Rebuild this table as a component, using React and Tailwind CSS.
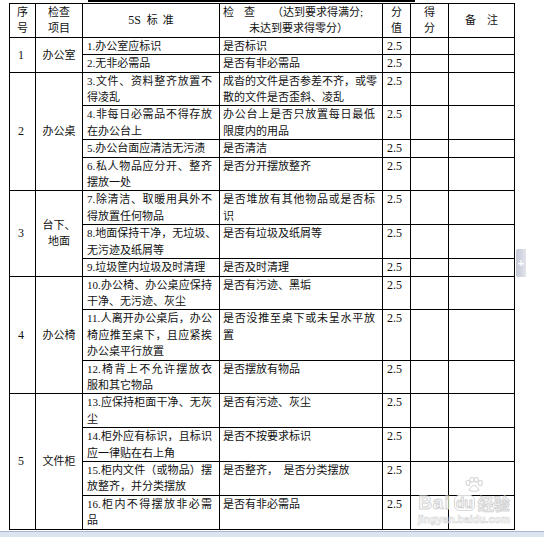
import React from "react";

const groups = [
  {
    no: "1",
    item: ["办公室"],
    rows: [
      { std: ["1.办公室应标识"], chk: ["是否标识"] },
      { std: ["2.无非必需品"], chk: ["是否有非必需品"] },
    ],
  },
  {
    no: "2",
    item: ["办公桌"],
    rows: [
      { std: ["3.文件、资料整齐放置不", "得凌乱"], chk: ["成沓的文件是否参差不齐，或零", "散的文件是否歪斜、凌乱"] },
      { std: ["4.非每日必需品不得存放", "在办公台上"], chk: ["办公台上是否只放置每日最低", "限度内的用品"] },
      { std: ["5.办公台面应清洁无污渍"], chk: ["是否清洁"] },
      { std: ["6.私人物品应分开、整齐", "摆放一处"], chk: ["是否分开摆放整齐"] },
    ],
  },
  {
    no: "3",
    item: ["台下、", "地面"],
    rows: [
      { std: ["7.除清洁、取暖用具外不", "得放置任何物品"], chk: ["是否堆放有其他物品或是否标", "识"] },
      { std: ["8.地面保持干净，无垃圾、", "无污迹及纸屑等"], chk: ["是否有垃圾及纸屑等"] },
      { std: ["9.垃圾筐内垃圾及时清理"], chk: ["是否及时清理"] },
    ],
  },
  {
    no: "4",
    item: ["办公椅"],
    rows: [
      { std: ["10.办公椅、办公桌应保持", "干净、无污迹、灰尘"], chk: ["是否有污迹、黑垢"] },
      { std: ["11.人离开办公桌后，办公", "椅应推至桌下，且应紧挨", "办公桌平行放置"], chk: ["是否没推至桌下或未呈水平放", "置"] },
      { std: ["12.椅背上不允许摆放衣", "服和其它物品"], chk: ["是否摆放有物品"] },
    ],
  },
  {
    no: "5",
    item: ["文件柜"],
    rows: [
      { std: ["13.应保持柜面干净、无灰", "尘"], chk: ["是否有污迹、灰尘"] },
      { std: ["14.柜外应有标识，且标识", "应一律贴在右上角"], chk: ["是否不按要求标识"] },
      { std: ["15.柜内文件（或物品）摆", "放整齐，并分类摆放"], chk: ["是否整齐，  是否分类摆放"] },
      { std: ["16.柜内不得摆放非必需", "品"], chk: ["是否有非必需品"] },
    ],
  },
];

const Lines = ({ lines }) =>
  lines.map((l, i) => (
    <div
      key={i}
      className={
        i < lines.length - 1
          ? "text-justify [text-align-last:justify] whitespace-nowrap"
          : "whitespace-pre"
      }
    >
      {l}
    </div>
  ));

const cell = "border border-black p-0";

export default function App() {
  return (
    <div className="relative w-[544px] h-[537px] overflow-hidden bg-white text-[11px] leading-[16.4px] text-[#111] [font-family:'Liberation_Serif','Noto_Sans_CJK_SC',serif]">
      <div className="ml-[88px] w-[327px] h-[2px] bg-black" />

      <table className="mt-[1px] ml-[9px] w-[505px] table-fixed border-collapse">
        <colgroup>
          <col className="w-[26px]" />
          <col className="w-[47px]" />
          <col className="w-[137px]" />
          <col className="w-[163px]" />
          <col className="w-[28px]" />
          <col className="w-[38px]" />
          <col className="w-[66px]" />
        </colgroup>
        <thead>
          <tr>
            <th className={`${cell} font-normal text-center align-middle`}>
              <div>序</div>
              <div>号</div>
            </th>
            <th className={`${cell} font-normal text-center align-middle`}>
              <div>检查</div>
              <div>项目</div>
            </th>
            <th className={`${cell} font-normal text-center align-middle`}>
              <span className="text-[12px]">5S</span>
              <span className="ml-[6px]">标</span>
              <span className="ml-[5px]">准</span>
            </th>
            <th className={`${cell} font-normal text-left align-middle pl-[3px]`}>
              <div className="flex whitespace-nowrap">
                <span>检</span>
                <span className="ml-[10px]">查</span>
                <span className="ml-[17px]">（达到要求得满分;</span>
              </div>
              <div className="ml-[26px] whitespace-nowrap">未达到要求得零分）</div>
            </th>
            <th className={`${cell} font-normal text-center align-middle`}>
              <div>分</div>
              <div>值</div>
            </th>
            <th className={`${cell} font-normal text-center align-middle`}>
              <div>得</div>
              <div>分</div>
            </th>
            <th className={`${cell} font-normal text-center align-middle`}>备　注</th>
          </tr>
        </thead>
        <tbody>
          {groups.map((g) =>
            g.rows.map((r, i) => (
              <tr key={g.no + "-" + i}>
                {i === 0 && (
                  <>
                    <td rowSpan={g.rows.length} className={`${cell} text-center align-middle pr-[3px] text-[12px]`}>
                      {g.no}
                    </td>
                    <td rowSpan={g.rows.length} className={`${cell} text-center align-middle`}>
                      {g.item.map((t) => (
                        <div key={t}>{t}</div>
                      ))}
                    </td>
                  </>
                )}
                <td className={`${cell} align-top pl-[4px] pr-[7px]`}>
                  <Lines lines={r.std} />
                </td>
                <td className={`${cell} align-top pl-[3px] pr-[7px]`}>
                  <Lines lines={r.chk} />
                </td>
                <td className={`${cell} align-top pl-[4px] text-[12px]`}>2.5</td>
                <td className={cell} />
                <td className={cell} />
              </tr>
            ))
          )}
        </tbody>
      </table>

      {/* watermark */}
      <div className="absolute left-[415px] top-[477px] w-[98px] flex flex-col items-center pointer-events-none">
        <svg width="20" height="16" viewBox="0 0 20 16" className="ml-[20px]">
          <g fill="none" stroke="#d9d9d9" strokeWidth="1.2">
            <ellipse cx="4" cy="6" rx="2" ry="2.6" />
            <ellipse cx="8" cy="2.8" rx="2" ry="2.4" />
            <ellipse cx="12.5" cy="2.8" rx="2" ry="2.4" />
            <ellipse cx="16.3" cy="6" rx="2" ry="2.6" />
            <path d="M5 13 Q10 4 15 13 Q10 16 5 13Z" />
          </g>
        </svg>
        <div className="flex items-end gap-[3px] h-[18px] leading-[16px] font-bold text-transparent [-webkit-text-stroke:1px_#d4d4d4] [font-family:'Liberation_Sans',sans-serif]">
          <span className="text-[19px] tracking-[1px]">Bai</span>
          <span className="text-[14px] leading-[14px] border-[1.5px] border-[#d9d9d9] rounded-[5px] px-[1px]">du</span>
          <span className="text-[16px] [font-family:'Noto_Sans_CJK_SC',sans-serif]">经验</span>
        </div>
        <div className="mt-[2px] text-[10.5px] leading-[12px] font-bold text-transparent [-webkit-text-stroke:0.6px_#d4d4d4] [font-family:'Liberation_Sans',sans-serif]">
          jingyan.baidu.com
        </div>
      </div>

      {/* side tab */}
      <div className="absolute left-[516px] top-[249px] w-[10px] h-[28px] rounded-l-[2px] bg-gradient-to-r from-[#c3c7d6] to-[#e3e5ec] flex items-center justify-center text-white text-[11px] font-bold leading-none [font-family:'Liberation_Sans',sans-serif]">
        +
      </div>

      <div className="absolute left-0 right-0 bottom-0 h-[6px] bg-[#dce4ef] border-t border-[#a9b8cf]" />
    </div>
  );
}
